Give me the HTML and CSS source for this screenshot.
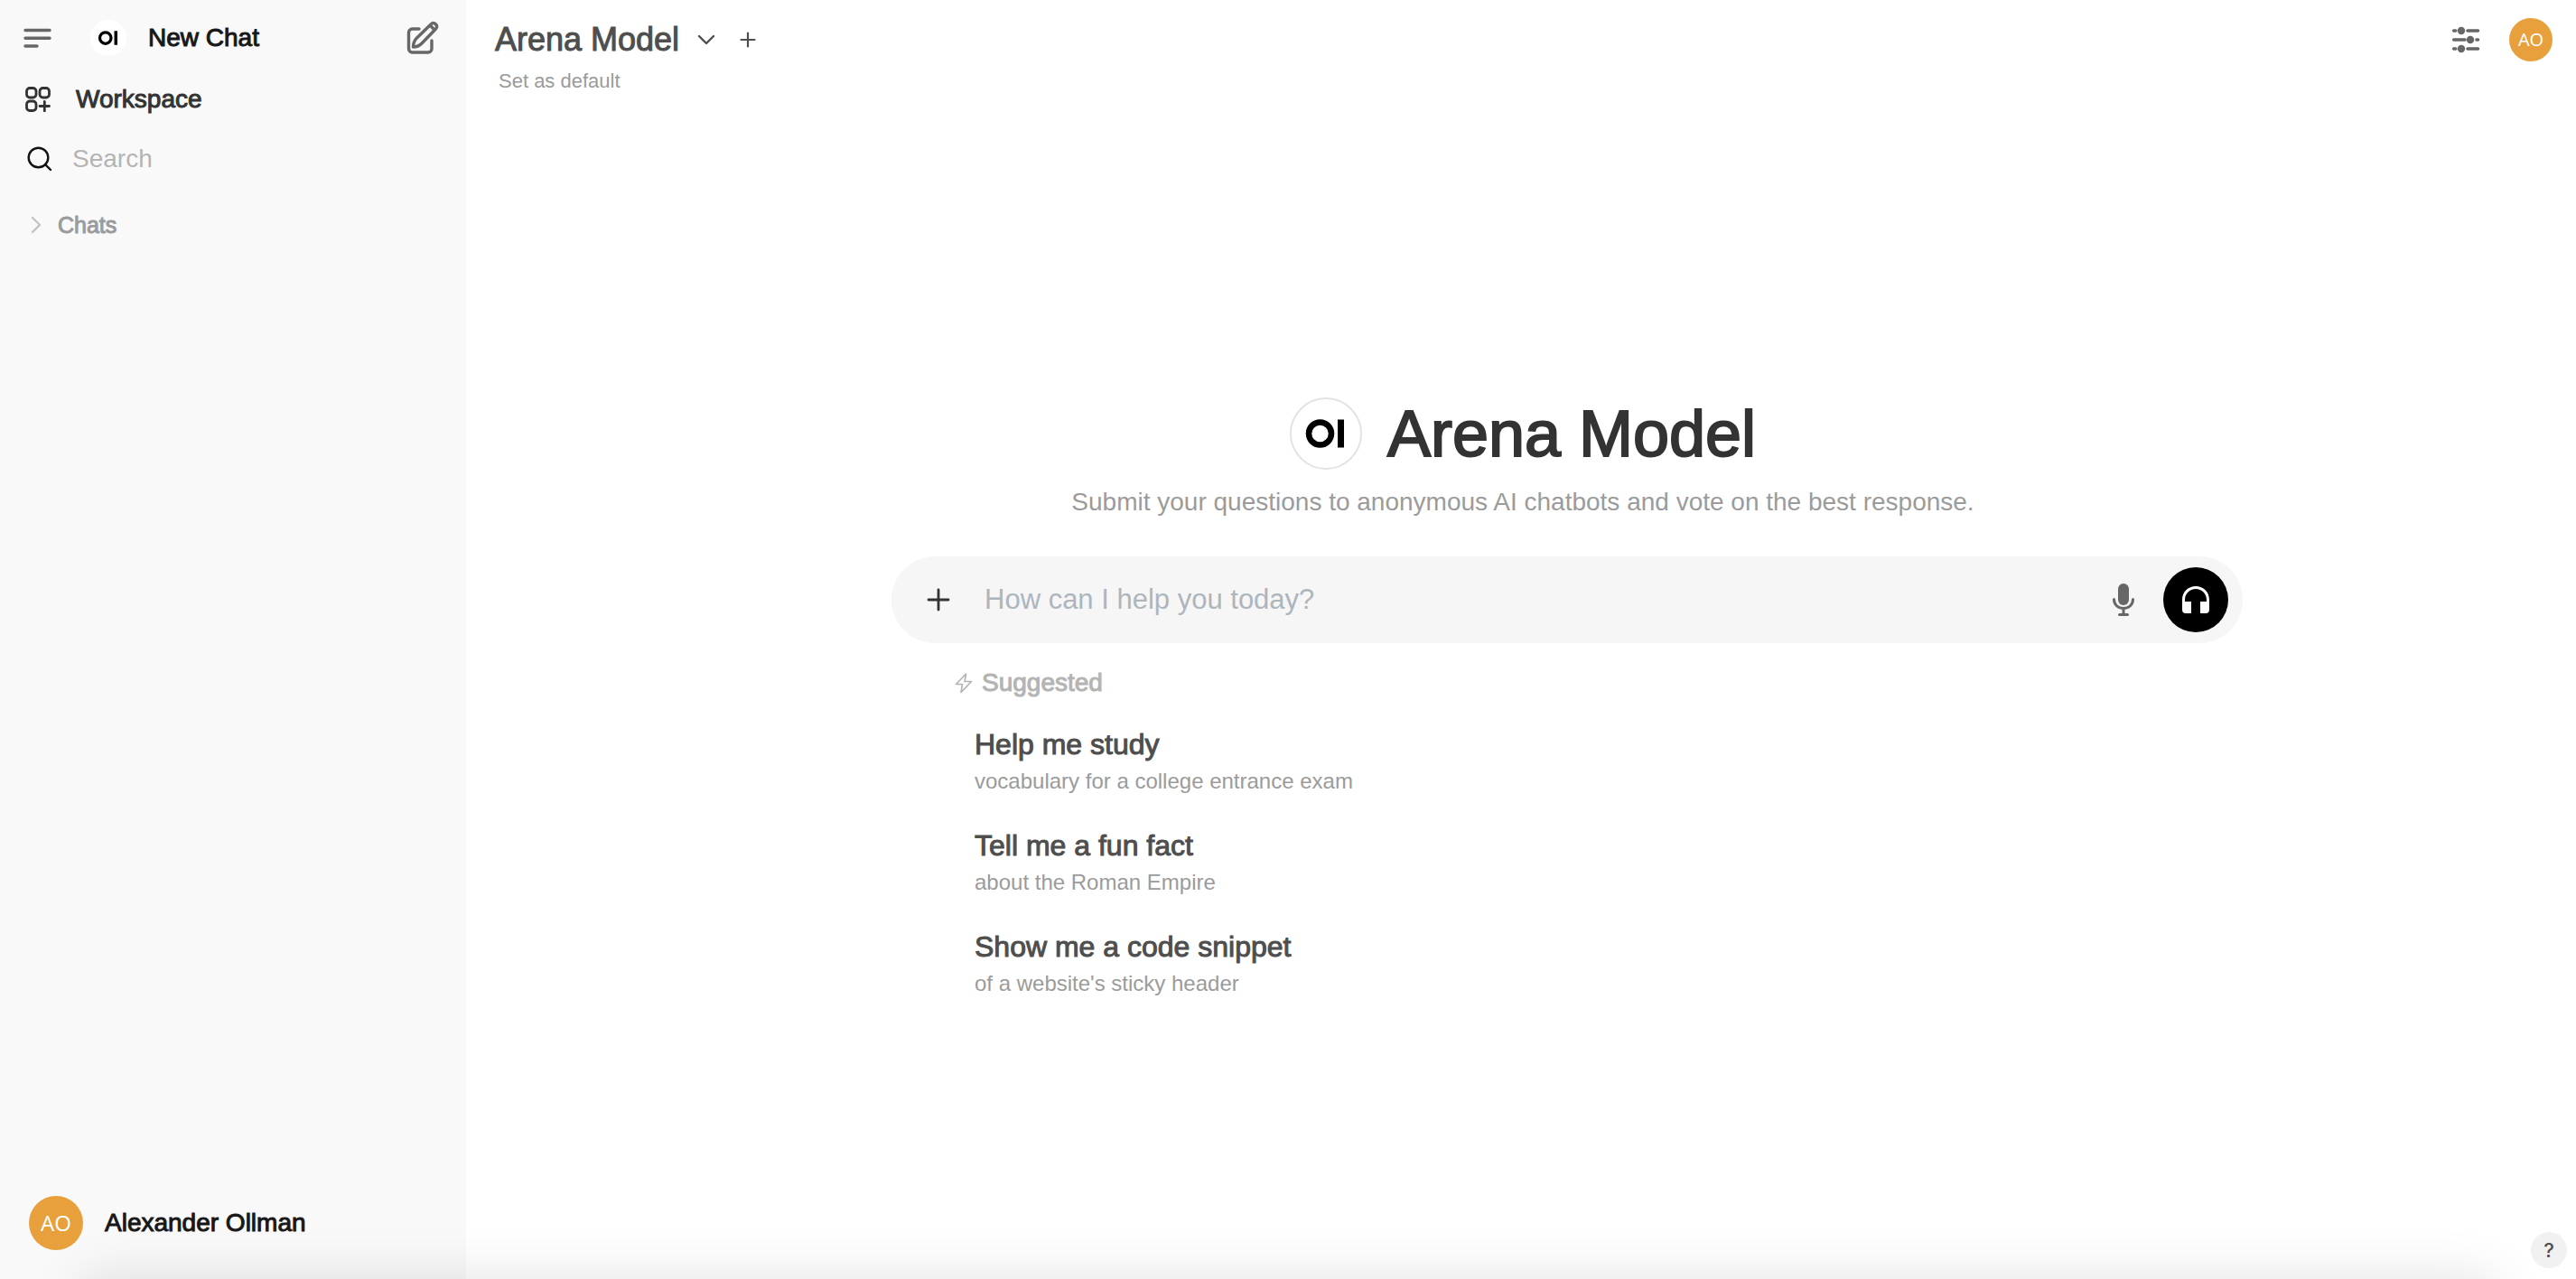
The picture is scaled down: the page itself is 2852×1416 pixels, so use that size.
FILE: index.html
```html
<!DOCTYPE html>
<html lang="en">
<head>
<meta charset="utf-8">
<title>New Chat</title>
<link rel="stylesheet" href="styles.css">
</head>
<body>
<div class="app">
  <aside class="sidebar">
    <div class="brand-row">
      <button class="icon-button" aria-label="Toggle sidebar">
        <svg width="38" height="40" viewBox="0 0 38 40" fill="none" stroke="#676767" stroke-width="3.4" stroke-linecap="round"><path d="M6 11.500h27M6 20.200h27M6 29h13"/></svg>
      </button>
      <a class="brand" href="#">
        <svg class="brand-logo" viewBox="0 0 80 80"><circle cx="40" cy="40" r="40" fill="#fff"/><circle cx="33.500" cy="40" r="12.500" fill="none" stroke="#000" stroke-width="6.500"/><path d="M53 24.500h7v31h-7z"/></svg>
        <span>New Chat</span>
      </a>
      <button class="icon-button" aria-label="New chat">
        <svg width="40" height="40" viewBox="0 0 40 40" fill="none" stroke="#676767" stroke-width="3.4" stroke-linecap="round" stroke-linejoin="round"><path d="M16 10H8.500a4 4 0 0 0-4 4v18a4 4 0 0 0 4 4H26a4 4 0 0 0 4-4V23"/><path d="M9.500 30c0-4 1.500-7.500 4-10L29.500 4.500a3.700 3.700 0 0 1 5.200 5.200L19 26c-2.500 2.500-5.500 4-9.500 4z"/><path d="M29 7l3.800 3.800"/></svg>
      </button>
    </div>
    <a class="nav-item" href="#">
      <svg width="28" height="28" viewBox="0 0 28 28" fill="none" stroke="#333" stroke-width="2.800" stroke-linecap="round"><rect x="1.500" y="1.500" width="10.500" height="10.500" rx="3.500"/><rect x="16" y="1.500" width="10.500" height="10.500" rx="3.500"/><rect x="1.500" y="16" width="10.500" height="10.500" rx="3.500"/><path d="M21.300 16.300v10.500M16 21.500h10.500"/></svg>
      <span>Workspace</span>
    </a>
    <label class="search">
      <svg width="28" height="28" viewBox="0 0 28 28" fill="none" stroke="#111" stroke-width="2.400" stroke-linecap="round"><circle cx="12.500" cy="12.500" r="10.800"/><path d="M20.300 20.300L26 26"/></svg>
      <input type="search" placeholder="Search" aria-label="Search">
    </label>
    <button class="folder">
      <svg width="12" height="20" viewBox="0 0 12 20" fill="none" stroke="#c4c4c4" stroke-width="2.400" stroke-linecap="round" stroke-linejoin="round"><path d="M2 2l8 8-8 8"/></svg>
      <span>Chats</span>
    </button>
    <button class="account">
      <span class="avatar avatar-large">AO</span>
      <span>Alexander Ollman</span>
    </button>
  </aside>
  <main class="main">
    <header class="topbar">
      <div class="model">
        <div class="model-row">
          <button class="model-name">Arena Model
            <svg width="20" height="12" viewBox="0 0 20 12" fill="none" stroke="#4e4e4e" stroke-width="2.400" stroke-linecap="round" stroke-linejoin="round"><path d="M2 2l8 8 8-8"/></svg>
          </button>
          <button class="icon-button" aria-label="Add model">
            <svg width="18" height="18" viewBox="0 0 18 18" fill="none" stroke="#4e4e4e" stroke-width="2.200" stroke-linecap="round"><path d="M9 1.500v15M1.500 9h15"/></svg>
          </button>
        </div>
        <button class="set-default">Set as default</button>
      </div>
      <div class="tools">
        <button class="icon-button" aria-label="Controls">
          <svg width="32" height="32" viewBox="0 0 32 32" fill="#676767" stroke="#676767" stroke-width="3.600" stroke-linecap="round"><path d="M2.700 6h2M18 6h11.500M2.700 16H15M28 16h1.500M2.700 26h2M18 26h11.500"/><circle cx="11" cy="6" r="2.400"/><circle cx="21" cy="16" r="2.400"/><circle cx="11" cy="26" r="2.400"/></svg>
        </button>
        <button class="avatar" aria-label="User menu">AO</button>
      </div>
    </header>
    <section class="intro">
      <div class="intro-title">
        <svg class="intro-logo" viewBox="0 0 80 80"><circle cx="40" cy="40" r="39" fill="#fff" stroke="#e3e3e3" stroke-width="2"/><circle cx="33.500" cy="40" r="12.500" fill="none" stroke="#000" stroke-width="6.500"/><path d="M53 24.500h7v31h-7z"/></svg>
        <h1>Arena Model</h1>
      </div>
      <p>Submit your questions to anonymous AI chatbots and vote on the best response.</p>
    </section>
    <section class="chat">
      <form class="composer">
        <button type="button" class="icon-button" aria-label="More">
          <svg width="26" height="26" viewBox="0 0 26 26" fill="none" stroke="#333" stroke-width="2.800" stroke-linecap="round"><path d="M13 2v22M2 13h22"/></svg>
        </button>
        <input type="text" placeholder="How can I help you today?" aria-label="Message">
        <button type="button" class="icon-button" aria-label="Record voice">
          <svg width="26" height="38" viewBox="0 0 26 38" fill="none" stroke="#676767" stroke-width="3" stroke-linecap="round"><rect x="7" y="1" width="12" height="24" rx="6" fill="#676767" stroke="none"/><path d="M2.500 18.500c0 6 4.500 10 10.500 10s10.500-4 10.500-10M13 29v6M8.500 35.500h9"/></svg>
        </button>
        <button type="button" class="call" aria-label="Call">
          <svg width="32" height="32" viewBox="0 0 32 32" fill="#fff"><path d="M16 1C7.500 1 1 7.500 1 16v11a4 4 0 0 0 4 4h6V18H4v-2C4 9.300 9.300 4 16 4s12 5.300 12 12v2h-7v13h6a4 4 0 0 0 4-4V16C31 7.500 24.500 1 16 1z"/></svg>
        </button>
      </form>
      <div class="suggestions">
        <h2>
          <svg width="20" height="24" viewBox="0 0 20 24" fill="none" stroke="#b4b4b4" stroke-width="1.700" stroke-linejoin="round"><path d="M12.500 2L1.500 13.500h7L7 22.500l11.500-12h-7.500z"/></svg>
          Suggested
        </h2>
        <button class="suggestion"><strong>Help me study</strong><span>vocabulary for a college entrance exam</span></button>
        <button class="suggestion"><strong>Tell me a fun fact</strong><span>about the Roman Empire</span></button>
        <button class="suggestion"><strong>Show me a code snippet</strong><span>of a website's sticky header</span></button>
      </div>
    </section>
  </main>
</div>
<div class="bottom-shade"></div>
<button class="help" aria-label="Help">?</button>
</body>
</html>
```
FILE: styles.css
```css
* { box-sizing: border-box; }
body {
  margin: 0;
  background: #fff;
  color: #171717;
  font-family: "Liberation Sans", Arial, sans-serif;
  font-size: 28px;
  line-height: 40px;
}
button {
  border: 0;
  padding: 0;
  background: none;
  color: inherit;
  font: inherit;
  text-align: left;
}
input {
  border: 0;
  padding: 0;
  outline: 0;
  background: none;
  color: inherit;
  font: inherit;
  min-width: 0;
  flex: 1;
}
a { color: inherit; text-decoration: none; }
svg { display: block; flex: none; }
h1, h2, p { margin: 0; }

.app { display: flex; min-height: 100vh; }
.icon-button { display: flex; flex: none; }

.sidebar {
  display: flex;
  flex-direction: column;
  flex: none;
  width: 516px;
  padding: 22px 28px 32px;
  background: #f9f9f9;
}
.brand-row { display: flex; align-items: center; margin: 0 0 0 -6px; }
.brand {
  display: flex;
  flex: 1;
  align-items: center;
  gap: 24px;
  margin-left: 40px;
  -webkit-text-stroke: 1px;
}
.brand-logo { width: 40px; height: 40px; }
.nav-item {
  display: flex;
  align-items: center;
  gap: 28px;
  margin-top: 28px;
  color: #333;
  -webkit-text-stroke: 1px;
}
.search {
  display: flex;
  align-items: center;
  gap: 22px;
  margin-top: 26px;
  padding-left: 2px;
}
.search input::placeholder { color: #b4b4b4; opacity: 1; }
.folder {
  display: flex;
  align-items: center;
  gap: 18px;
  margin-top: 33px;
  padding-left: 6px;
  color: #9b9b9b;
  font-size: 25px;
  -webkit-text-stroke: 1px;
}
.account {
  display: flex;
  align-items: center;
  gap: 24px;
  margin-top: auto;
  padding-left: 4px;
  -webkit-text-stroke: 1px;
}
.avatar {
  display: flex;
  align-items: center;
  justify-content: center;
  width: 48px;
  height: 48px;
  border-radius: 50%;
  background: #e8a03d;
  color: #fff;
  font-family: "Open Sans", sans-serif;
  font-size: 20px;
  font-weight: 500;
  -webkit-text-stroke: 0;
}
.avatar-large { width: 60px; height: 60px; font-size: 24px; }

.main { flex: 1; min-width: 0; }
.topbar {
  display: flex;
  justify-content: space-between;
  padding: 20px 26px 0 32px;
}
.model-row { display: flex; align-items: center; gap: 27px; }
.model-name {
  display: flex;
  align-items: center;
  gap: 20px;
  color: #4e4e4e;
  font-size: 36px;
  line-height: 48px;
  -webkit-text-stroke: 1px;
}
.set-default {
  display: block;
  padding: 6px 0 0 4px;
  color: #9b9b9b;
  font-size: 22px;
  line-height: 32px;
}
.tools { display: flex; align-items: center; align-self: flex-start; gap: 32px; }

.intro {
  display: flex;
  flex-direction: column;
  align-items: center;
  margin-top: 334px;
  padding-left: 4px;
  color: #9b9b9b;
}
.intro-title { display: flex; align-items: center; gap: 28px; }
.intro-logo { width: 80px; height: 80px; }
.intro h1 {
  color: #333;
  font-size: 72px;
  font-weight: 400;
  line-height: 80px;
  -webkit-text-stroke: 2px;
}
.intro p { margin-top: 16px; }

.chat { max-width: 1598px; margin: 40px auto 0; padding-left: 102px; }
.composer {
  display: flex;
  align-items: center;
  height: 96px;
  padding: 0 16px 0 39px;
  border-radius: 48px;
  background: #f6f6f6;
  font-size: 31px;
}
.composer input { margin: 0 38px; height: 48px; }
.composer input::placeholder { color: #adb5bd; opacity: 1; }
.call {
  display: flex;
  align-items: center;
  justify-content: center;
  width: 72px;
  height: 72px;
  margin-left: 31px;
  border-radius: 50%;
  background: #000;
}
.suggestions { padding: 24px 0 0 70px; }
.suggestions h2 {
  display: flex;
  align-items: center;
  gap: 10px;
  margin-bottom: 26px;
  color: #b4b4b4;
  font-size: 28px;
  font-weight: 400;
  -webkit-text-stroke: 1px;
}
.suggestion {
  display: block;
  margin-bottom: 30px;
  padding-left: 22px;
  color: #9b9b9b;
  font-size: 24px;
  line-height: 38px;
}
.suggestion strong, .suggestion span { display: block; }
.suggestion strong {
  color: #4e4e4e;
  font-size: 32px;
  font-weight: 400;
  line-height: 44px;
  -webkit-text-stroke: 1px;
}

/* soft shadow rising from below the window's lower edge */
.bottom-shade {
  position: fixed;
  right: 90px;
  bottom: -100px;
  left: 90px;
  height: 100px;
  box-shadow: 0 0 60px rgba(0, 0, 0, 0.12);
  pointer-events: none;
}
.help {
  position: fixed;
  right: 10px;
  bottom: 12px;
  width: 40px;
  height: 40px;
  border-radius: 50%;
  background: #f1f1f1;
  color: #4e4e4e;
  font-family: Inter, sans-serif;
  font-size: 22px;
  font-weight: 500;
  text-align: center;
}
```
